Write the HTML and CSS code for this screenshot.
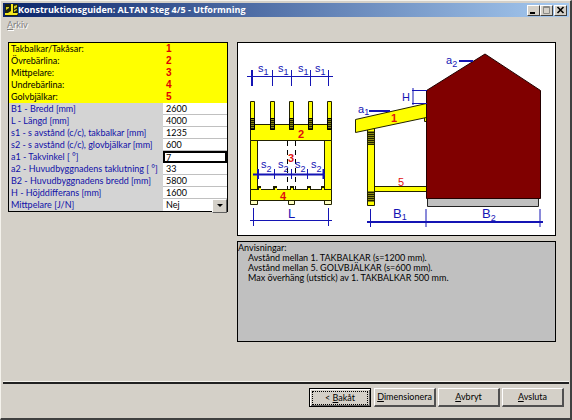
FILE: index.html
```
<!DOCTYPE html>
<html lang="sv">
  <head>
    <meta charset="UTF-8" />
    <meta name="viewport" content="width=device-width, initial-scale=1.0" />
    <title>Konstruktionsguiden: ALTAN Steg 4/5 - Utformning</title>
    <link rel="stylesheet" href="styles.css">
  </head>
  <body>
    <div class="window">
      <header class="titleBar">
        <svg class="logo" viewBox="0 0 13 12" aria-hidden="true">
          <rect width="13" height="12" fill="#1c2410" />
          <path d="M6 0h2v9h5l-1 2H0v-2h3l3-2z" fill="#f4e81c" />
          <path d="M9 2l3-1v2l-3 2zM1 3h3v1l-3 2zM9 6l3-1v1l-3 2z" fill="#d8cc20" />
        </svg>
        <h1>Konstruktionsguiden: ALTAN Steg 4/5 - Utformning</h1>
        <div class="windowBtns">
          <button type="button" aria-label="Minimera">
            <svg viewBox="0 0 9 8"><path d="M1 6h5v2H1z" fill="#000" /></svg>
          </button>
          <button type="button" aria-label="Maximera" disabled>
            <svg viewBox="0 0 9 8"><path d="M1.500 .5h6v7h-6zM1 1.500h7" fill="none" stroke="#8a8a86" /></svg>
          </button>
          <button type="button" class="closeBtn" aria-label="Stäng">
            <svg viewBox="0 0 9 8"><path d="M1.500 1l6 6M7.500 1l-6 6" fill="none" stroke="#000" stroke-width="1.600" /></svg>
          </button>
        </div>
      </header>
      <nav class="menu"><a href="#"><u>A</u>rkiv</a></nav>

      <main class="content">
        <table class="params">
          <tbody class="legend">
            <tr><th>Takbalkar/Takåsar:</th><td>1</td></tr>
            <tr><th>Övrebärlina:</th><td>2</td></tr>
            <tr><th>Mittpelare:</th><td>3</td></tr>
            <tr><th>Undrebärlina:</th><td>4</td></tr>
            <tr><th>Golvbjälkar:</th><td>5</td></tr>
          </tbody>
          <tbody class="values">
            <tr><th><label for="b1">B1 - Bredd [mm]</label></th><td><input id="b1" type="text" value="2600"></td></tr>
            <tr><th><label for="l">L - Längd [mm]</label></th><td><input id="l" type="text" value="4000"></td></tr>
            <tr><th><label for="s1">s1 - s avstånd (c/c), takbalkar [mm]</label></th><td><input id="s1" type="text" value="1235"></td></tr>
            <tr><th><label for="s2">s2 - s avstånd (c/c), glovbjälkar [mm]</label></th><td><input id="s2" type="text" value="600"></td></tr>
            <tr class="active"><th><label for="a1">a1 - Takvinkel [ °]</label></th><td><input id="a1" type="text" value="7"></td></tr>
            <tr><th><label for="a2">a2 - Huvudbyggnadens taklutning [ °]</label></th><td><input id="a2" type="text" value="33"></td></tr>
            <tr><th><label for="b2">B2 - Huvudbyggnadens bredd [mm]</label></th><td><input id="b2" type="text" value="5800"></td></tr>
            <tr><th><label for="h">H - Höjddifferans [mm]</label></th><td><input id="h" type="text" value="1600"></td></tr>
            <tr>
              <th><label for="mitt">Mittpelare [J/N]</label></th>
              <td class="selectCell"><select id="mitt"><option>Nej</option><option>Ja</option></select></td>
            </tr>
          </tbody>
        </table>

        <div class="right">
          <svg class="drawing" viewBox="238 43 317 192" role="img" aria-label="Altan">
            <defs>
              <pattern id="hatch" width="4" height="2" patternUnits="userSpaceOnUse">
                <rect width="4" height="2" fill="#8c8c10" />
                <rect width="4" height="1" fill="#222200" />
              </pattern>
            </defs>

            <!-- front view -->
            <g class="wood">
              <path d="M250.500 140.500h7v49h-7zM324.500 140.500h7v49h-7z" />
              <path d="M250.500 124.500h81v16h-81z" />
              <path d="M250.500 101.500h4v28h-4zM270.500 101.500h4v28h-4zM289.500 101.500h4v28h-4zM308.500 101.500h4v28h-4zM327.500 101.500h4v28h-4z" />
              <path d="M250.500 200.500h7v4h-7zM288.500 200.500h6v4h-6zM324.500 200.500h7v4h-7z" class="feet" />
              <path d="M250.500 189.500h81v11h-81z" />
            </g>
            <g fill="url(#hatch)" stroke="#000">
              <path d="M250.500 118.500h4v11h-4zM270.500 118.500h4v11h-4zM289.500 118.500h4v11h-4zM308.500 118.500h4v11h-4zM327.500 118.500h4v11h-4z" />
            </g>
            <path d="M257 186h4v4h-4zM273 186h4v4h-4zM290 186h4v4h-4zM307 186h4v4h-4zM321 186h4v4h-4z" fill="#1c1c00" />
            <path d="M259 188h2v2h-2zM275 188h2v2h-2zM291 188h2v2h-2zM308 188h2v2h-2zM322 188h2v2h-2z" fill="#ff0" />
            <path d="M287.500 141v48M295.500 141v48" fill="none" stroke="#000" stroke-dasharray="5 4" />

            <!-- side view -->
            <g class="wood">
              <path d="M374.500 186.500h52v5h-52z" />
              <path d="M367.500 128.500h7v77h-7z" />
              <path d="M424.500 116.500h2v5h-2z" />
              <path d="M355.500 119.500l71-16v14l-71 15z" />
            </g>
            <path d="M368 131h6v14h-6zM368 191h6v11h-6z" fill="url(#hatch)" />
            <path d="M427.500 198.500h111v8h-111z" fill="#c0c0c0" stroke="#222" />
            <path d="M426.500 90.500l58.500-36.500 55.500 36.500v108h-114z" fill="#800000" stroke="#200" />

            <!-- dimension lines -->
            <g class="dims">
              <path d="M247 76.500h86M272.500 70v16M291.500 70v16M310.500 70v16M328.500 70v16" />
              <path d="M252 70v16" stroke-width="2" />
              <path d="M253 174.500h72M258 169v10M323.500 169v10" stroke-width="2" />
              <path d="M274.500 169v10M291.500 169v10M307.500 169v10" />
              <path d="M250 220.500h82M253.500 208v18M328.500 208v18" />
              <path d="M369 111h21M459 61h14" stroke-width="2" />
              <path d="M427 90.500h-15M427 103.500h-15M413 88v17" />
              <path d="M367 222h176" stroke-width="2" />
              <path d="M370.500 209v18M426 209v18M540 209v18" />
            </g>
            <g class="dimText">
              <text x="258" y="72">s<tspan dy="3" class="sub">1</tspan></text>
              <text x="278" y="72">s<tspan dy="3" class="sub">1</tspan></text>
              <text x="298" y="72">s<tspan dy="3" class="sub">1</tspan></text>
              <text x="315" y="72">s<tspan dy="3" class="sub">1</tspan></text>
              <text x="261" y="168">s<tspan dy="4" class="sub">2</tspan></text>
              <text x="278" y="168">s<tspan dy="4" class="sub">2</tspan></text>
              <text x="295" y="168">s<tspan dy="4" class="sub">2</tspan></text>
              <text x="311" y="168">s<tspan dy="4" class="sub">2</tspan></text>
              <text x="358" y="113">a<tspan dy="2" class="sub">1</tspan></text>
              <text x="446" y="64">a<tspan dy="3" class="sub">2</tspan></text>
              <text x="402" y="101">H</text>
              <text x="288" y="218" class="big">L</text>
              <text x="393" y="218" class="big">B<tspan dy="2" class="sub">1</tspan></text>
              <text x="482" y="218" class="big">B<tspan dy="3" class="sub">2</tspan></text>
            </g>
            <g class="marks">
              <text x="298" y="138">2</text>
              <text x="288" y="162">3</text>
              <text x="280" y="200">4</text>
              <text x="391" y="122">1</text>
              <text x="398" y="186" class="thin">5</text>
            </g>
          </svg>

          <section class="notes">
            <h2>Anvisningar:</h2>
            <p>Avstånd mellan 1. TAKBALKAR (s=1200 mm).</p>
            <p>Avstånd mellan 5. GOLVBJÄLKAR (s=600 mm).</p>
            <p>Max överhäng (utstick) av 1. TAKBALKAR 500 mm.</p>
          </section>
        </div>
      </main>

      <footer class="footer">
        <button type="button" class="btn default"><span>&lt; <u>B</u>akåt</span></button>
        <button type="button" class="btn"><span><u>D</u>imensionera</span></button>
        <button type="button" class="btn"><span><u>A</u>vbryt</span></button>
        <button type="button" class="btn"><span><u>A</u>vsluta</span></button>
      </footer>
    </div>
  </body>
</html>
```

FILE: styles.css
```
* {
  margin: 0;
  padding: 0;
  box-sizing: border-box;
}
body {
  font-family: Lato, "Liberation Sans", sans-serif;
  font-size: 9px;
  line-height: 10px;
  color: #000;
  background: #d4d0c8;
}
.window {
  display: flex;
  flex-direction: column;
  min-height: 100vh;
  padding: 2px 1px 1px 2px;
  border: 1px solid #f4f2ec;
  border-right: 2px solid #404040;
  border-bottom: 2px solid #404040;
}

/* title bar */
.titleBar {
  display: flex;
  align-items: center;
  height: 14px;
  padding: 0 2px;
  background: linear-gradient(to right, #0a246a, #a6caf0);
}
.logo {
  width: 13px;
  height: 12px;
}
.titleBar h1 {
  flex: 1;
  color: #fff;
  font-family: "Open Sans", "Noto Sans", sans-serif;
  font-size: 9px;
  font-weight: bold;
  line-height: 14px;
}
.windowBtns {
  display: flex;
}
.windowBtns button {
  display: flex;
  align-items: center;
  justify-content: center;
  width: 13px;
  height: 11px;
  background: #d4d0c8;
  border: 1px solid #fff;
  border-right-color: #404040;
  border-bottom-color: #404040;
}
.windowBtns .closeBtn {
  margin-left: 1px;
}
.windowBtns svg {
  width: 9px;
  height: 8px;
}
.menu {
  padding: 3px 4px;
}
.menu a {
  color: #808080;
  text-decoration: none;
  text-shadow: 1px 1px 0 #fff;
}

/* content */
.content {
  flex: 1;
  display: flex;
  align-items: flex-start;
  gap: 9px;
  padding: 9px 13px 9px 5px;
}
.params {
  width: 220px;
  border: 1px solid #000;
  border-collapse: separate;
  border-spacing: 0;
}
.params tr {
  height: 12px;
}
.params th {
  font-weight: normal;
  text-align: left;
  padding-left: 2px;
  white-space: nowrap;
}
.params td {
  width: 64px;
}
.legend {
  background: #ff0;
}
.legend td {
  padding-left: 3px;
  color: #e00000;
  font-family: "Liberation Sans", sans-serif;
  font-size: 10px;
  font-weight: bold;
}
.values {
  color: #1010a8;
  background: #d4d4d4;
}
.values td {
  background: #fff;
  border-bottom: 1px solid #c0c0c0;
}
.values input,
.values select {
  display: block;
  width: 100%;
  height: 11px;
  padding: 0 3px;
  border: 0;
  outline: 0;
  background: transparent;
  color: #000;
  font: inherit;
}
.values .active input {
  padding: 0 1px;
  border: 2px solid #000;
  height: 12px;
}
.values .active td {
  border: 0;
}
.values .selectCell {
  position: relative;
  border: 0;
}
.values select {
  appearance: none;
}
.selectCell::before {
  content: "";
  position: absolute;
  right: 0;
  top: 0;
  width: 13px;
  height: 12px;
  background: #d4d0c8;
  border: 1px solid #fff;
  border-right-color: #606060;
  border-bottom-color: #606060;
}
.selectCell::after {
  content: "";
  position: absolute;
  right: 4px;
  top: 5px;
  border: 3px solid transparent;
  border-top-color: #000;
  border-bottom: 0;
}

.right {
  flex: 1;
  display: flex;
  flex-direction: column;
  gap: 5px;
}
.drawing {
  display: block;
  width: 100%;
  background: #fff;
  border: 1px solid #000;
}
.wood path {
  fill: #ff0;
  stroke: #222200;
}
.wood .feet {
  fill: #ffffc0;
}
.dims path {
  fill: none;
  stroke: #1414b4;
}
.dimText,
.marks {
  font-family: "Liberation Sans", sans-serif;
  font-size: 11px;
  fill: #1414b4;
}
.dimText .big {
  font-size: 13px;
}
.dimText .sub {
  font-size: 9px;
}
.marks {
  font-weight: bold;
  fill: #e01010;
}
.marks .thin {
  font-weight: normal;
}
.notes {
  min-height: 101px;
  padding: 1px 0;
  background: #c0c0c0;
  border: 1px solid #000;
}
.notes h2 {
  font-size: 9px;
  font-weight: normal;
}
.notes p {
  padding-left: 10px;
}

/* buttons */
.footer {
  display: flex;
  justify-content: flex-end;
  gap: 2px;
  padding: 4px 5px 10px;
  border-top: 2px solid #202020;
  box-shadow: 0 -1px 0 #f4f2ec;
}
.btn {
  width: 62px;
  height: 19px;
  background: #d4d0c8;
  border: 1px solid #fff;
  border-right: 2px solid #505050;
  border-bottom: 2px solid #505050;
  font: inherit;
}
.btn.default {
  padding: 1px;
  margin-right: 1px;
  border: 1px solid #000;
  box-shadow: inset 1px 1px 0 #fff, inset -1px -1px 0 #606060;
}
.default span {
  display: block;
  margin: 0 1px;
  border: 1px dotted #000;
  line-height: 12px;
}
```
